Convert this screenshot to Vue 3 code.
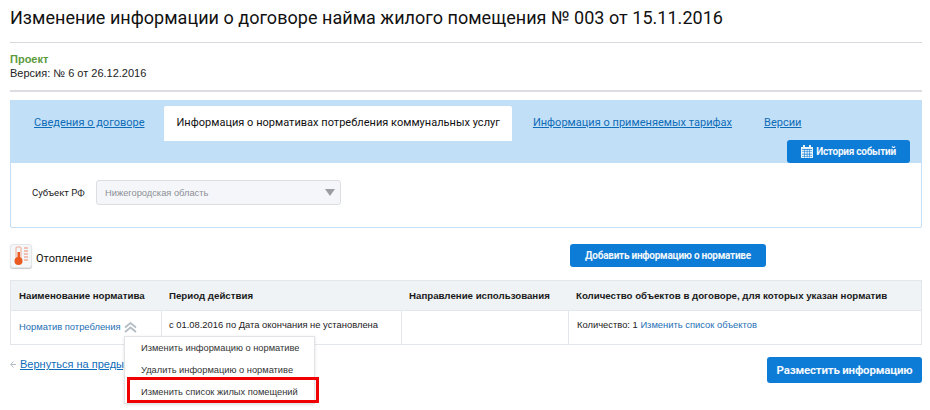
<script setup>
const tabs = [
  { label: 'Сведения о договоре', active: false },
  { label: 'Информация о нормативах потребления коммунальных услуг', active: true },
  { label: 'Информация о применяемых тарифах', active: false },
  { label: 'Версии', active: false }
]
const columns = ['Наименование норматива', 'Период действия', 'Направление использования', 'Количество объектов в договоре, для которых указан норматив']
const menu = ['Изменить информацию о нормативе', 'Удалить информацию о нормативе', 'Изменить список жилых помещений']
</script>

<template>
  <div class="page">
    <h1 class="title">Изменение информации о договоре найма жилого помещения № 003 от 15.11.2016</h1>
    <div class="meta">
      <div class="status">Проект</div>
      <div class="version">Версия: № 6 от 26.12.2016</div>
    </div>
    <section class="panel">
      <div class="head">
        <nav class="tabs">
          <a v-for="t in tabs" :key="t.label" class="tab" :class="{ active: t.active }">{{ t.label }}</a>
        </nav>
        <div class="head-actions">
          <button class="btn history">
            <svg width="12" height="13" viewBox="0 0 12 13"><path fill="#e8f2fb" d="M0 2h2V0h2v2h4V0h2v2h2v11H0z"/><path fill="#0d7cd6" d="M1 4h10v.7H1zM1 6.4h10v.6H1zM1 8.8h10v.6H1zM1 11.2h10v.6H1zM3.4 4.5h.6v8h-.6zM5.8 4.5h.6v8h-.6zM8.2 4.5h.6v8h-.6z"/></svg>
            История событий
          </button>
        </div>
      </div>
      <div class="filter">
        <label class="filter-label">Субъект РФ</label>
        <div class="select">
          <span>Нижегородская область</span>
          <i class="caret"></i>
        </div>
      </div>
    </section>

    <div class="service">
      <div class="service-name">
        <span class="service-icon">
          <svg width="16" height="20" viewBox="0 0 16 20">
            <rect x="3" y="1" width="5" height="11" rx="1" fill="none" stroke="#f2a58a" stroke-width="1"/>
            <rect x="4.5" y="6" width="2.5" height="7" fill="#ea5a20"/>
            <circle cx="5.5" cy="15" r="4" fill="#ea5a20"/>
            <path d="M11 2h4M11 5h4M11 8h4M11 11h4M11 14h4" stroke="#f08a6a" stroke-width="1.2"/>
          </svg>
        </span>
        <span class="service-label">Отопление</span>
      </div>
      <button class="btn add">Добавить информацию о нормативе</button>
    </div>

    <div class="table">
      <div v-for="c in columns" :key="c" class="th">{{ c }}</div>
      <div class="td first">
        <a class="link">Норматив потребления</a>
        <svg class="chev" width="13" height="11" viewBox="0 0 13 11"><path d="M1 5.5 6.5 1 12 5.5M1 10 6.5 5.5 12 10" fill="none" stroke="#b4bcc4" stroke-width="1.8"/></svg>
      </div>
      <div class="td period">с 01.08.2016 по Дата окончания не установлена</div>
      <div class="td"></div>
      <div class="td">Количество: 1 <a class="link">Изменить список объектов</a></div>
    </div>

    <div class="footer">
      <div class="back">
        <svg class="arrow" width="6" height="7" viewBox="0 0 6 7"><path d="M3.5 .5 .7 3.5l2.8 3M1 3.5h5" fill="none" stroke="#b5bcc4" stroke-width="1"/></svg>
        <a>Вернуться на предыдущую страницу</a>
      </div>
      <button class="btn publish">Разместить информацию</button>

      <ul class="menu">
        <li v-for="m in menu" :key="m">{{ m }}</li>
      </ul>
      <div class="highlight"></div>
    </div>
  </div>
</template>

<style>
html, body { margin: 0; background: #fff; overflow: hidden; }
</style>

<style scoped>
.page {
  width: 912px;
  height: 410px;
  padding: 0 8px 0 10px;
  font-family: "Liberation Sans", Arial, sans-serif;
  font-size: 11px;
  color: #1c1c1c;
  overflow: hidden;
}
.title {
  margin: 0;
  padding: 5px 0 0;
  height: 37px;
  box-sizing: border-box;
  font-family: Roboto, "Liberation Sans", sans-serif;
  font-weight: 400;
  font-size: 18px;
  line-height: 26px;
  letter-spacing: 0.03px;
  color: #111;
  white-space: nowrap;
}
.meta {
  border-top: 1px solid #d8d9de;
  border-bottom: 2px solid #dcdde2;
  margin-top: 5px;
  padding: 9px 0 10px;
  height: 28px;
  line-height: 14px;
}
.status { color: #5b9a3d; font-weight: 700; }
.version { color: #222; }
.panel {
  margin-top: 8px;
  height: 128px;
  box-sizing: border-box;
  border: 1px solid #c3def5;
  border-radius: 2px;
}
.head {
  height: 63px;
  margin: -1px -1px 0;
  background: #c1dff6;
  box-sizing: border-box;
  padding-top: 6px;
}
.tabs { display: flex; padding-left: 4px; }
.tab {
  height: 35px;
  line-height: 34px;
  padding: 0 20px;
  font-family: Roboto, "Liberation Sans", sans-serif;
  font-size: 11px;
  letter-spacing: 0.02px;
  color: #0f6cb8;
  text-decoration: underline;
  white-space: nowrap;
}
.tab:first-child { padding: 0 20px; letter-spacing: 0; }
.tab.active {
  background: #fff;
  color: #111;
  text-decoration: none;
  padding: 0 12px;
  border-radius: 2px 2px 0 0;
}
.tab:nth-child(3) { padding: 0 16px 0 21px; }
.tab:nth-child(4) { padding: 0 0 0 16px; }
.head-actions {
  display: flex;
  justify-content: flex-end;
  margin-top: -1px;
  padding-right: 12px;
}
.btn {
  border: 0;
  background: #0d7cd6;
  color: #f1f7fc;
  font-family: Roboto, "Liberation Sans", sans-serif;
  font-weight: 700;
  font-size: 10px;
  letter-spacing: -0.25px;
  border-radius: 3px;
  padding: 0;
  white-space: nowrap;
}
.history {
  width: 123px;
  height: 23px;
  display: flex;
  align-items: center;
  justify-content: center;
  gap: 3px;
}
.filter {
  display: flex;
  align-items: center;
  padding: 17px 0 0 21px;
}
.filter-label {
  width: 64px;
  font-family: Roboto, "Liberation Sans", sans-serif;
  font-size: 9.6px;
  color: #222;
}
.select {
  width: 245px;
  height: 25px;
  box-sizing: border-box;
  border: 1px solid #dcdee2;
  border-radius: 3px;
  background: #f5f6fa;
  color: #8c8f94;
  font-size: 9.3px;
  display: flex;
  align-items: center;
  justify-content: space-between;
  padding: 0 5px 0 8px;
}
.caret {
  width: 0;
  height: 0;
  border-left: 5px solid transparent;
  border-right: 5px solid transparent;
  border-top: 7px solid #9a9da1;
}
.service {
  margin-top: 16px;
  height: 36px;
  display: flex;
  align-items: flex-start;
}
.service-name {
  display: flex;
  align-items: center;
  gap: 4px;
  width: 560px;
  font-size: 11px;
  font-family: Roboto, "Liberation Sans", sans-serif;
  color: #111;
}
.service-label { margin-top: 5px; }
.service-icon {
  width: 22px;
  height: 24px;
  box-sizing: border-box;
  border-radius: 3px;
  background: #f3f7fa;
  border: 1px solid #e6e6e6;
  box-shadow: 0 1px 1px #c9c9c9;
  display: flex;
  align-items: center;
  justify-content: center;
}
.add { width: 196px; height: 23px; }
.table {
  display: grid;
  grid-template-columns: 150px 240px 167px minmax(0, 1fr);
  border: 1px solid #e3e7eb;
}
.th {
  height: 29px;
  line-height: 29px;
  background: #f0f3f6;
  font-weight: 700;
  font-size: 9.7px;
  color: #1a1a1a;
  padding-left: 8px;
  border-bottom: 1px solid #e3e7eb;
  white-space: nowrap;
}
.td {
  height: 33px;
  line-height: 27px;
  padding-left: 8px;
  font-size: 9.4px;
  color: #222;
  border-left: 1px solid #e3e7eb;
  white-space: nowrap;
}
.period { padding-left: 7px; }
.first {
  border-left: 0;
  display: flex;
  align-items: center;
  gap: 3px;
  height: 31px;
  padding-bottom: 2px;
}
.link { color: #1e6fb5; }
.chev { margin-top: 1px; }
.footer {
  position: relative;
  height: 64px;
  display: flex;
  align-items: flex-start;
  justify-content: space-between;
}
.back {
  margin-top: 13px;
  font-size: 11px;
  white-space: nowrap;
  display: flex;
  align-items: center;
  gap: 4px;
}
.back a { color: #0f6cb8; text-decoration: underline; }
.publish {
  width: 155px;
  height: 26px;
  margin-top: 12px;
  font-size: 11.5px;
  letter-spacing: -0.2px;
}
.menu {
  position: absolute;
  left: 114px;
  top: -9px;
  width: 191px;
  height: 68px;
  box-sizing: border-box;
  margin: 0;
  padding: 0;
  list-style: none;
  background: #fff;
  border: 1px solid #e2e3e6;
  box-shadow: 0 1px 3px rgba(0, 0, 0, .12);
}
.menu li {
  height: 22px;
  line-height: 22px;
  padding-left: 16px;
  font-size: 9.3px;
  color: #333;
  white-space: nowrap;
}
.highlight {
  position: absolute;
  left: 117px;
  top: 32px;
  width: 192px;
  height: 26px;
  box-sizing: border-box;
  border: 3px solid #f00000;
}
</style>
